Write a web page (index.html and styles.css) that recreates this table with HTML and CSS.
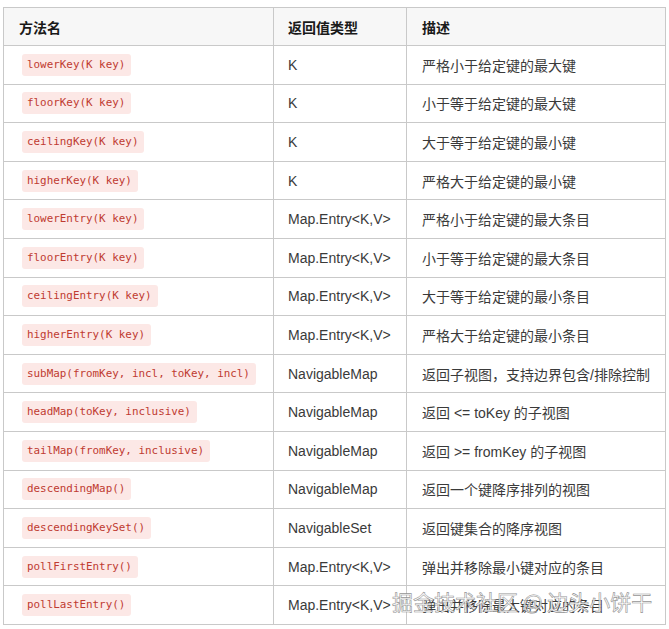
FILE: index.html
```html
<!DOCTYPE html>
<html lang="zh-CN">
<head>
<meta charset="utf-8">
<link rel="stylesheet" href="styles.css">
</head>
<body>
<table class="api">
  <thead>
    <tr class="head"><th class="c1">方法名</th><th class="c2">返回值类型</th><th class="c3">描述</th></tr>
  </thead>
  <tbody>
    <tr><td><code>lowerKey(K key)</code></td><td>K</td><td>严格小于给定键的最大键</td></tr>
    <tr><td><code>floorKey(K key)</code></td><td>K</td><td>小于等于给定键的最大键</td></tr>
    <tr><td><code>ceilingKey(K key)</code></td><td>K</td><td>大于等于给定键的最小键</td></tr>
    <tr><td><code>higherKey(K key)</code></td><td>K</td><td>严格大于给定键的最小键</td></tr>
    <tr><td><code>lowerEntry(K key)</code></td><td>Map.Entry&lt;K,V&gt;</td><td>严格小于给定键的最大条目</td></tr>
    <tr><td><code>floorEntry(K key)</code></td><td>Map.Entry&lt;K,V&gt;</td><td>小于等于给定键的最大条目</td></tr>
    <tr><td><code>ceilingEntry(K key)</code></td><td>Map.Entry&lt;K,V&gt;</td><td>大于等于给定键的最小条目</td></tr>
    <tr><td><code>higherEntry(K key)</code></td><td>Map.Entry&lt;K,V&gt;</td><td>严格大于给定键的最小条目</td></tr>
    <tr><td><code>subMap(fromKey, incl, toKey, incl)</code></td><td>NavigableMap</td><td>返回子视图，支持边界包含/排除控制</td></tr>
    <tr><td><code>headMap(toKey, inclusive)</code></td><td>NavigableMap</td><td>返回 &lt;= toKey 的子视图</td></tr>
    <tr><td><code>tailMap(fromKey, inclusive)</code></td><td>NavigableMap</td><td>返回 &gt;= fromKey 的子视图</td></tr>
    <tr><td><code>descendingMap()</code></td><td>NavigableMap</td><td>返回一个键降序排列的视图</td></tr>
    <tr><td><code>descendingKeySet()</code></td><td>NavigableSet</td><td>返回键集合的降序视图</td></tr>
    <tr><td><code>pollFirstEntry()</code></td><td>Map.Entry&lt;K,V&gt;</td><td>弹出并移除最小键对应的条目</td></tr>
    <tr><td><code>pollLastEntry()</code></td><td>Map.Entry&lt;K,V&gt;</td><td>弹出并移除最大键对应的条目</td></tr>
  </tbody>
</table>
<div class="watermark">掘金技术社区 @ 边头小饼干</div>
</body>
</html>
```

FILE: styles.css
```css
html, body {
  margin: 0;
  padding: 0;
  background: #ffffff;
}
body {
  padding: 7px 0 0 3px;
  font-family: "Liberation Sans", "Noto Sans CJK SC", sans-serif;
  font-size: 14px;
  color: #3a3a3a;
  position: relative;
  width: 669px;
  height: 629px;
  box-sizing: border-box;
  overflow: hidden;
}
.api {
  border-collapse: collapse;
  width: 663px;
  table-layout: fixed;
}
.api th, .api td {
  border: 1px solid #c9c9c9;
  padding: 0 0 0 15px;
  text-align: left;
  vertical-align: middle;
  white-space: nowrap;
}
.api th {
  background: #f7f7f7;
  font-weight: bold;
  color: #1a1a1a;
  font-family: "Noto Sans CJK SC", sans-serif;
  font-size: 14px;
}
.head { height: 38px; }
.api tbody tr { height: 38.6px; }
.c1 { width: 254px; }
.c2 { width: 118px; padding-left: 14px !important; }
.c3 { width: auto; }
.api td:nth-child(2) { padding-left: 14px; }
code {
  display: inline-block;
  margin-left: 3px;
  padding: 0 6px 0 5px;
  height: 22px;
  line-height: 22px;
  background: #fce8e6;
  color: #bf3b31;
  border-radius: 3px;
  font-family: "DejaVu Sans Mono", monospace;
  font-size: 10.9px;
  vertical-align: middle;
}
.watermark {
  position: absolute;
  left: 392px;
  top: 587px;
  font-family: "Noto Sans CJK SC", sans-serif;
  font-size: 21px;
  line-height: 28px;
  color: #ffffff;
  -webkit-text-stroke: 0.6px #8a8a8a;
  opacity: 0.9;
  white-space: nowrap;
}
```
